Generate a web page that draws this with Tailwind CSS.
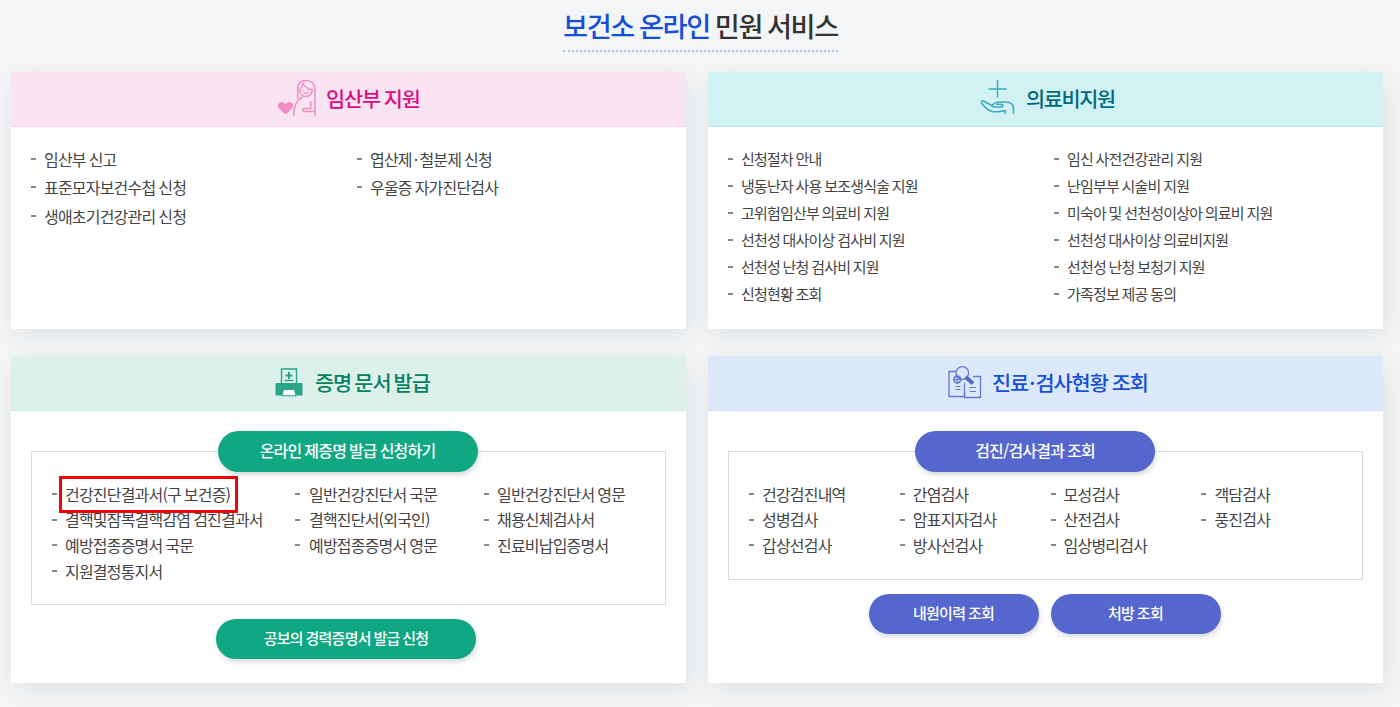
<!DOCTYPE html>
<html lang="ko">
<head>
    <meta charset="UTF-8">
    <meta name="viewport" content="width=device-width, initial-scale=1.0">
    <title>보건소 온라인 민원 서비스</title>
    <script src="https://cdn.jsdelivr.net/npm/@tailwindcss/browser@4"></script>
</head>
<body class="min-h-screen bg-[#f3f5f7] text-[#444] font-['Noto_Sans_CJK_KR',sans-serif] tracking-[-0.05em] [word-spacing:-0.05em] overflow-hidden">
    <!-- Page title -->
    <div class="flex justify-center h-[72px] pl-[1px]">
        <h1 class="h-[52px] pt-[5px] leading-[40px] text-[27.2px] font-medium tracking-[-0.05em] [word-spacing:-0.05em] text-[#333] whitespace-nowrap border-b-2 border-dotted border-[#b4c1ee]"><span class="text-[#164fd8]">보건소 온라인</span> 민원 서비스</h1>
    </div>

    <div class="grid grid-cols-[675px_675px] gap-x-[22px] gap-y-[27px] pl-[11px]">
        <!-- Pregnancy support -->
        <section class="h-[257px] bg-white shadow-[4px_8px_24px_rgba(40,60,60,0.09)]">
            <h2 class="flex items-center h-[55px] pl-[266px] pb-px bg-[#fbe4f1] border-b border-[#f9d3e7] text-[20.8px] font-medium tracking-[-0.055em] text-[#de0b82]">
                <svg class="w-[40px] h-[38px] mr-[9px] mb-px" viewBox="0 0 40 38" fill="none" stroke="#f08cc4" stroke-width="1.5" stroke-linecap="round" stroke-linejoin="round">
                    <path d="M8.500 35.500 L2.300 29.800 C-0.500 26.500 1.500 23 4.500 23 C6.500 23 7.700 24 8.500 25.300 C9.500 23.800 10.800 23 12.500 23 C15.500 23 17.500 26.500 14.700 29.800 Z" fill="#f08cc4" stroke="none"/>
                    <path d="M20.700 19.500 V9.500 C20.700 4.500 24 1.500 29 1.500 C34.500 1.500 38 5 38 10 V36.500"/>
                    <path d="M26 4.500 C25.500 7.500 24.500 9 22.500 10.500 C22.500 14.500 25 17.500 28.700 17.500 C32.500 17.500 35.300 14.500 35.300 10.700 C31 10.200 28 8 26 4.500 Z"/>
                    <path d="M26.500 13.500 Q28.500 15.500 30.500 13.500 M25.300 11.300 h1 M30.500 11.300 h1" stroke-width="1.1"/>
                    <path d="M16.700 36.500 C16.700 28 18.500 21.500 25 18.500 M33.700 23 V29.500 H28.500 C25 29.500 25 32.500 28 32.500 H37.500"/>
                </svg>
                임산부 지원
            </h2>
            <div class="flex pl-[20px] pt-[17.5px] leading-[28.5px]">
                <ul class="w-[326px] [&>li]:flex [&>li]:items-center [&>li]:before:w-[5px] [&>li]:before:h-[2px] [&>li]:before:mr-2 [&>li]:before:bg-[#888]">
                    <li>임산부 신고</li>
                    <li>표준모자보건수첩 신청</li>
                    <li>생애초기건강관리 신청</li>
                </ul>
                <ul class="[&>li]:flex [&>li]:items-center [&>li]:before:w-[5px] [&>li]:before:h-[2px] [&>li]:before:mr-2 [&>li]:before:bg-[#888]">
                    <li>엽산제<span class="mx-[2px]">·</span>철분제 신청</li>
                    <li>우울증 자가진단검사</li>
                </ul>
            </div>
        </section>

        <!-- Medical expenses -->
        <section class="h-[257px] bg-white shadow-[4px_8px_24px_rgba(40,60,60,0.09)]">
            <h2 class="flex items-center h-[55px] pl-[272px] pb-px bg-[#d1f1f3] border-b border-[#bfe8eb] text-[20.8px] font-medium tracking-[-0.065em] text-[#006b80]">
                <svg class="w-[35px] h-[38px] mr-[11px] mb-[3px]" viewBox="0 0 35 38" fill="none" stroke="#3caabd" stroke-width="1.5" stroke-linecap="round" stroke-linejoin="round">
                    <path d="M17.500 2.500 V19 M9 11 H26"/>
                    <path d="M33.500 35.500 V31 C33.500 26 30 24 25.500 24 H19 C16 24 14 25.200 11.500 27.500 L4.500 23.300 C2.300 22 0.300 23.500 2 25.500 C4.500 28.800 8 32.500 12 33.500 C16 34.500 21 33.200 25.200 32.500 V35.500"/>
                    <path d="M11.500 27.500 L14 29 H20.500 C23.500 29 23.300 26.200 21 26.200 H16.500"/>
                </svg>
                의료비지원
            </h2>
            <div class="flex pl-[20px] pt-[18px] text-[15px] leading-[27px]">
                <ul class="w-[326px] [&>li]:flex [&>li]:items-center [&>li]:before:w-[5px] [&>li]:before:h-[2px] [&>li]:before:mr-2 [&>li]:before:bg-[#888]">
                    <li>신청절차 안내</li>
                    <li>냉동난자 사용 보조생식술 지원</li>
                    <li>고위험임산부 의료비 지원</li>
                    <li>선천성 대사이상 검사비 지원</li>
                    <li>선천성 난청 검사비 지원</li>
                    <li>신청현황 조회</li>
                </ul>
                <ul class="[&>li]:flex [&>li]:items-center [&>li]:before:w-[5px] [&>li]:before:h-[2px] [&>li]:before:mr-2 [&>li]:before:bg-[#888]">
                    <li>임신 사전건강관리 지원</li>
                    <li>난임부부 시술비 지원</li>
                    <li>미숙아 및 선천성이상아 의료비 지원</li>
                    <li>선천성 대사이상 의료비지원</li>
                    <li>선천성 난청 보청기 지원</li>
                    <li>가족정보 제공 동의</li>
                </ul>
            </div>
        </section>

        <!-- Certificates -->
        <section class="h-[327px] bg-white shadow-[4px_8px_24px_rgba(40,60,60,0.09)]">
            <h2 class="flex items-center h-[55px] pl-[264px] pb-px bg-[#dbf1ea] border-b border-[#cbe9e3] text-[20.8px] font-medium tracking-[-0.05em] [word-spacing:-0.08em] text-[#088062]">
                <svg class="w-[28px] h-[30px] mr-[12px] mb-px" viewBox="0 0 28 30" fill="none" stroke="#27a586" stroke-width="1.4">
                    <path d="M6.500 17 V2 H21.500 V17"/>
                    <path d="M14 5 V12 M10.500 8.500 H17.500" stroke-width="2"/>
                    <path d="M9.500 13.500 H18.500"/>
                    <path d="M1.500 16 H26.500 Q27.500 16 27.500 17 V27.500 Q27.500 28.500 26.500 28.500 H1.500 Q0.500 28.500 0.500 27.500 V17 Q0.500 16 1.500 16 Z" fill="#27a586" stroke="none"/>
                    <path d="M8.500 22.500 H19.500 L21 28.800 H7 Z" fill="#fff" stroke-width="1"/>
                </svg>
                증명 문서 발급
            </h2>
            <div class="flex flex-col items-center px-[20px] pt-[20px]">
                <button class="relative z-10 w-[260px] h-[41px] mr-[2px] pb-[3px] rounded-full bg-[#10a783] text-white font-medium tracking-[-0.05em] [word-spacing:-0.05em] shadow-[1px_3px_5px_rgba(0,0,0,0.15)]">온라인 제증명 발급 신청하기</button>
                <div class="flex w-full h-[154px] -mt-[21px] pl-[20px] pt-[29.6px] border border-[#d9dbdc] leading-[25.7px] whitespace-nowrap">
                    <ul class="w-[243px] [&>li]:flex [&>li]:items-center [&>li]:before:w-[5px] [&>li]:before:h-[2px] [&>li]:before:mr-2 [&>li]:before:mb-px [&>li]:before:bg-[#888]">
                        <li class="relative">건강진단결과서(구 보건증)<span class="absolute left-[6.5px] -top-[6px] w-[179px] h-[37px] border-3 border-[#f90006]"></span></li>
                        <li>결핵및잠복결핵감염 검진결과서</li>
                        <li>예방접종증명서 국문</li>
                        <li>지원결정통지서</li>
                    </ul>
                    <ul class="w-[189px] [&>li]:flex [&>li]:items-center [&>li]:before:w-[5px] [&>li]:before:h-[2px] [&>li]:before:mr-[9px] [&>li]:before:mb-px [&>li]:before:bg-[#888]">
                        <li>일반건강진단서 국문</li>
                        <li>결핵진단서(외국인)</li>
                        <li>예방접종증명서 영문</li>
                    </ul>
                    <ul class="[&>li]:flex [&>li]:items-center [&>li]:before:w-[5px] [&>li]:before:h-[2px] [&>li]:before:mr-2 [&>li]:before:mb-px [&>li]:before:bg-[#888]">
                        <li>일반건강진단서 영문</li>
                        <li>채용신체검사서</li>
                        <li>진료비납입증명서</li>
                    </ul>
                </div>
                <button class="w-[260px] h-[40px] mt-[14px] mr-[5px] pb-px rounded-full bg-[#10a783] text-white text-[15px] font-medium tracking-[-0.05em] [word-spacing:-0.05em] shadow-[1px_3px_5px_rgba(0,0,0,0.15)]">공보의 경력증명서 발급 신청</button>
            </div>
        </section>

        <!-- Treatment and test results -->
        <section class="h-[327px] bg-white shadow-[4px_8px_24px_rgba(40,60,60,0.09)]">
            <h2 class="flex items-center h-[55px] pl-[240px] pb-px bg-[#dce9fb] border-b border-[#cfe0fa] text-[20.8px] font-medium tracking-[-0.05em] text-[#164fd8]">
                <svg class="w-[34px] h-[34px] mr-[10px] mb-px" viewBox="0 0 34 34" fill="none" stroke="#6478d6" stroke-width="1.3">
                    <path d="M8 6.500 H1 V31.500 H16.500 M20 6.500 H21 M16.500 27 V32.500 H32.500 V11.500 H25"/>
                    <circle cx="14.300" cy="8" r="6.300"/>
                    <circle cx="9.300" cy="14.500" r="3.400" stroke-width="1.800"/>
                    <path d="M6.800 14.500 H11.800 M9.300 12 V17" stroke-width="1.200"/>
                    <path d="M17.500 12 L25 18.500" stroke="#5367cc" stroke-width="4"/>
                    <path d="M7.500 21.500 H12.500 M7.500 24.500 H12.500 M21.500 22.500 H28 M21.500 26.500 H28" stroke-width="1.200"/>
                    <path d="M16.500 31 V18"/>
                </svg>
                진료<span class="mx-[1px]">·</span>검사현황 조회
            </h2>
            <div class="flex flex-col items-center px-[20px] pt-[20px]">
                <button class="relative z-10 w-[240px] h-[41px] mr-[21px] pb-[3px] rounded-full bg-[#5567cf] text-white font-medium tracking-[-0.05em] [word-spacing:-0.05em] shadow-[1px_3px_5px_rgba(0,0,0,0.15)]">검진/검사결과 조회</button>
                <div class="flex w-full h-[129px] -mt-[21px] pl-[20px] pt-[29.6px] border border-[#d9dbdc] leading-[25.7px] whitespace-nowrap">
                    <ul class="w-[150.8px] [&>li]:flex [&>li]:items-center [&>li]:before:w-[5px] [&>li]:before:h-[2px] [&>li]:before:mr-2 [&>li]:before:mb-px [&>li]:before:bg-[#888]">
                        <li>건강검진내역</li>
                        <li>성병검사</li>
                        <li>갑상선검사</li>
                    </ul>
                    <ul class="w-[150.8px] [&>li]:flex [&>li]:items-center [&>li]:before:w-[5px] [&>li]:before:h-[2px] [&>li]:before:mr-2 [&>li]:before:mb-px [&>li]:before:bg-[#888]">
                        <li>간염검사</li>
                        <li>암표지자검사</li>
                        <li>방사선검사</li>
                    </ul>
                    <ul class="w-[150.8px] [&>li]:flex [&>li]:items-center [&>li]:before:w-[5px] [&>li]:before:h-[2px] [&>li]:before:mr-2 [&>li]:before:mb-px [&>li]:before:bg-[#888]">
                        <li>모성검사</li>
                        <li>산전검사</li>
                        <li>임상병리검사</li>
                    </ul>
                    <ul class="[&>li]:flex [&>li]:items-center [&>li]:before:w-[5px] [&>li]:before:h-[2px] [&>li]:before:mr-2 [&>li]:before:mb-px [&>li]:before:bg-[#888]">
                        <li>객담검사</li>
                        <li>풍진검사</li>
                    </ul>
                </div>
                <div class="flex gap-3 mt-[14px] mr-[2px]">
                    <button class="w-[170px] h-[40px] pb-px rounded-full bg-[#5567cf] text-white text-[15px] font-medium tracking-[-0.05em] [word-spacing:-0.05em] shadow-[1px_3px_5px_rgba(0,0,0,0.15)]">내원이력 조회</button>
                    <button class="w-[170px] h-[40px] pb-px rounded-full bg-[#5567cf] text-white text-[15px] font-medium tracking-[-0.05em] [word-spacing:-0.05em] shadow-[1px_3px_5px_rgba(0,0,0,0.15)]">처방 조회</button>
                </div>
            </div>
        </section>
    </div>
</body>
</html>
